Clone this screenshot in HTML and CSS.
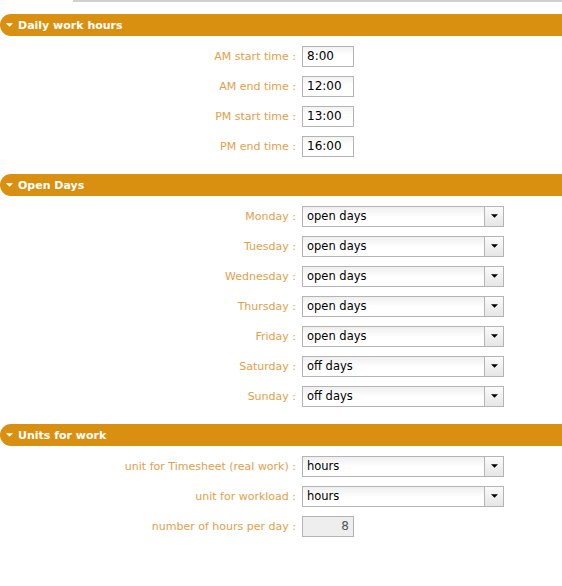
FILE: index.html
```html
<!DOCTYPE html>
<html lang="en">
    <head>
        <meta charset="utf-8">
        <title>Parameters</title>
        <link rel="stylesheet" href="styles.css">
    </head>
    <body>
        <svg>
            <symbol id="arrow-down" viewBox="0 0 8 4"><polygon points="0,0 8,0 4,4"/></symbol>
        </svg>
        <div class="topline"></div>

        <div class="section">
            <h2 class="section-title"><svg class="toggle"><use href="#arrow-down"></use></svg>Daily work hours</h2>
            <div class="form">
                <label>AM start time :</label>
                <input class="field" type="text" value="8:00">
                <label>AM end time :</label>
                <input class="field" type="text" value="12:00">
                <label>PM start time :</label>
                <input class="field" type="text" value="13:00">
                <label>PM end time :</label>
                <input class="field" type="text" value="16:00">
            </div>
        </div>

        <div class="section">
            <h2 class="section-title"><svg class="toggle"><use href="#arrow-down"></use></svg>Open Days</h2>
            <div class="form">
                <label>Monday :</label>
                <div class="combo"><span class="value">open days</span><span class="btn"><svg><use href="#arrow-down"></use></svg></span></div>
                <label>Tuesday :</label>
                <div class="combo"><span class="value">open days</span><span class="btn"><svg><use href="#arrow-down"></use></svg></span></div>
                <label>Wednesday :</label>
                <div class="combo"><span class="value">open days</span><span class="btn"><svg><use href="#arrow-down"></use></svg></span></div>
                <label>Thursday :</label>
                <div class="combo"><span class="value">open days</span><span class="btn"><svg><use href="#arrow-down"></use></svg></span></div>
                <label>Friday :</label>
                <div class="combo"><span class="value">open days</span><span class="btn"><svg><use href="#arrow-down"></use></svg></span></div>
                <label>Saturday :</label>
                <div class="combo"><span class="value">off days</span><span class="btn"><svg><use href="#arrow-down"></use></svg></span></div>
                <label>Sunday :</label>
                <div class="combo"><span class="value">off days</span><span class="btn"><svg><use href="#arrow-down"></use></svg></span></div>
            </div>
        </div>

        <div class="section">
            <h2 class="section-title"><svg class="toggle"><use href="#arrow-down"></use></svg>Units for work</h2>
            <div class="form">
                <label>unit for Timesheet (real work) :</label>
                <div class="combo"><span class="value">hours</span><span class="btn"><svg><use href="#arrow-down"></use></svg></span></div>
                <label>unit for workload :</label>
                <div class="combo"><span class="value">hours</span><span class="btn"><svg><use href="#arrow-down"></use></svg></span></div>
                <label>number of hours per day :</label>
                <input class="field readonly" type="text" value="8" readonly>
            </div>
        </div>
    </body>
</html>
```

FILE: styles.css
```css
body {
    font-family: "DejaVu Sans", Verdana, sans-serif;
    font-size: 11px;
    margin: 0;
    background: white;
}
body>svg {
    display: none;
}
.topline {
    margin-left: 73px;
    border-top: 2px solid #d0d0d0;
}
.section {
    margin-top: 12px;
}
.section + .section {
    margin-top: 13px;
}
.section-title {
    display: flex;
    align-items: center;
    height: 22px;
    margin: 0;
    padding-left: 6px;
    background: #d98f0f;
    border-radius: 11px 0 0 11px;
    color: white;
    font-size: 11px;
    font-weight: bold;
}
.toggle {
    width: 7px;
    height: 4px;
    margin-right: 5px;
    fill: white;
}
.form {
    display: grid;
    grid-template-columns: 296px auto;
    grid-auto-rows: 30px;
    column-gap: 6px;
    align-items: center;
    justify-items: start;
    padding-top: 5px;
}
.form label {
    justify-self: end;
    color: #e0a04c;
}
.field {
    box-sizing: border-box;
    width: 52px;
    height: 21px;
    margin: 0;
    padding: 0 4px;
    border: 1px solid #b4b4b4;
    background: linear-gradient(#f2f2f2, white 8px);
    font-family: inherit;
    font-size: 12px;
    color: black;
}
.field.readonly {
    background: #eeeeee;
    text-align: right;
    color: #555;
}
.combo {
    box-sizing: border-box;
    display: flex;
    width: 202px;
    height: 21px;
    border: 1px solid #b4b4b4;
}
.combo .value {
    flex: 1;
    padding-left: 4px;
    line-height: 19px;
    font-size: 11.5px;
    background: linear-gradient(#efefef, white 10px);
}
.combo .btn {
    display: flex;
    align-items: center;
    justify-content: center;
    width: 18px;
    border-left: 1px solid #b4b4b4;
    background: linear-gradient(#fbfbfb, #e6e6e6);
}
.combo .btn svg {
    width: 7px;
    height: 4px;
    fill: black;
}
```
